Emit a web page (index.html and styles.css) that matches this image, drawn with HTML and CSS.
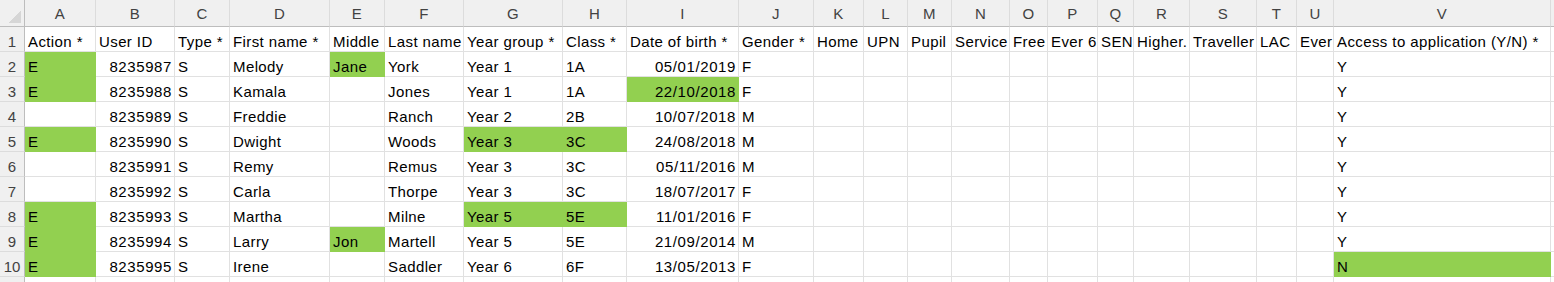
FILE: index.html
```html
<!DOCTYPE html>
<html lang="en">
<head>
    <title>Pupils import</title>
    <link rel="stylesheet" href="styles.css">
</head>
<body>
    <div class="sheet" id="sheet"></div>

    <script>
        const letters = ['A','B','C','D','E','F','G','H','I','J','K','L','M','N','O','P','Q','R','S','T','U','V',''];
        const headers = ['Action *','User ID','Type *','First name *','Middle','Last name','Year group *','Class *','Date of birth *','Gender *','Home','UPN','Pupil','Service','Free','Ever 6','SEN','Higher.','Traveller','LAC','Ever','Access to application (Y/N) *',''];
        // action, id, type, first, middle, last, year, class, dob, gender, access
        const pupils = [
            ['E','8235987','S','Melody','Jane','York','Year 1','1A','05/01/2019','F','Y'],
            ['E','8235988','S','Kamala','','Jones','Year 1','1A','22/10/2018','F','Y'],
            ['','8235989','S','Freddie','','Ranch','Year 2','2B','10/07/2018','M','Y'],
            ['E','8235990','S','Dwight','','Woods','Year 3','3C','24/08/2018','M','Y'],
            ['','8235991','S','Remy','','Remus','Year 3','3C','05/11/2016','M','Y'],
            ['','8235992','S','Carla','','Thorpe','Year 3','3C','18/07/2017','F','Y'],
            ['E','8235993','S','Martha','','Milne','Year 5','5E','11/01/2016','F','Y'],
            ['E','8235994','S','Larry','Jon','Martell','Year 5','5E','21/09/2014','M','Y'],
            ['E','8235995','S','Irene','','Saddler','Year 6','6F','13/05/2013','F','N']
        ];
        // cells filled green, as "row:col"
        const filled = ['2:0','2:4','3:0','3:8','5:0','5:6','5:7','8:0','8:6','8:7','9:0','9:4','10:0','10:21'];
        const rightAligned = [1, 8];

        let sheet = document.getElementById('sheet');

        function addCell(cls, text) {
            let cell = document.createElement('div');
            cell.className = cls;
            cell.innerText = text;
            sheet.appendChild(cell);
        }

        addCell('corner', '');
        letters.forEach(l => addCell('col-head', l));

        for (let r = 1; r <= 11; r++) {
            addCell('row-head', r <= 10 ? r : '');
            let values;
            if (r === 1) {
                values = headers;
            } else if (r <= 10) {
                let p = pupils[r - 2];
                values = p.slice(0, 10).concat(['','','','','','','','','','','', p[10], '']);
            } else {
                values = letters.map(() => '');
            }
            values.forEach((v, c) => {
                let cls = 'cell';
                if (rightAligned.includes(c) && r > 1) cls += ' num';
                if (filled.includes(r + ':' + c)) cls += ' green';
                addCell(cls, v);
            });
        }
    </script>
</body>
</html>
```

FILE: styles.css
```css
body {
    margin: 0;
    background: #fff;
    font-family: 'Liberation Sans', Arial, sans-serif;
    overflow: hidden;
}
.sheet {
    display: grid;
    grid-template-columns: 25px 71px 79px 55px 100px 55px 79px 99px 64px 112px 75px 50px 44px 44px 58px 38px 50px 36px 56px 67px 40px 37px 217px 20px;
    grid-template-rows: 27px;
    grid-auto-rows: 25px;
    width: 1574px;
    height: 282px;
    overflow: hidden;
}
.corner {
    background: #f0f0f0;
    border-right: 1px solid #bdbdbd;
    border-bottom: 1px solid #bdbdbd;
    display: flex;
    justify-content: flex-end;
    align-items: flex-end;
    padding: 0 3px 3px 0;
    box-sizing: border-box;
}
.corner::after {
    content: '';
    width: 13px;
    height: 13px;
    background: linear-gradient(to bottom right, transparent 50%, #d6d6d6 50%);
}
.col-head {
    background: #f0f0f0;
    color: #424242;
    font-size: 15px;
    letter-spacing: 0.3px;
    text-align: center;
    line-height: 24px;
    padding-top: 2px;
    border-right: 1px solid #dcdcdc;
    border-bottom: 1px solid #bdbdbd;
}
.row-head {
    background: #f0f0f0;
    color: #424242;
    font-size: 15px;
    text-align: center;
    line-height: 18px;
    padding-top: 6px;
    overflow: hidden;
    border-right: 1px solid #bdbdbd;
    border-bottom: 1px solid #dcdcdc;
}
.cell {
    font-size: 15px;
    letter-spacing: 0.4px;
    color: #000;
    line-height: 18px;
    padding: 6px 3px 0;
    white-space: nowrap;
    overflow: hidden;
    border-right: 1px solid #e1e1e1;
    border-bottom: 1px solid #e1e1e1;
}
.num {
    text-align: right;
    letter-spacing: 0.6px;
    padding-right: 2px;
}
.green {
    background: #92d050;
    border-color: #92d050;
}
```
